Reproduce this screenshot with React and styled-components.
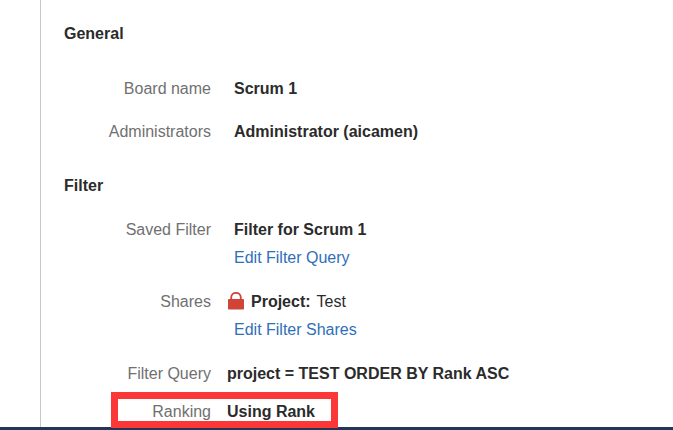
import styled, { createGlobalStyle } from "styled-components";

const GlobalStyle = createGlobalStyle`
  * {
    box-sizing: border-box;
  }

  body {
    margin: 0;
    background: #fff;
    color: #2b2b2b;
    font-family: "Liberation Sans", Arial, sans-serif;
    font-size: 16px;
    line-height: 20px;
  }
`;

const Page = styled.div`
  min-height: 100vh;
  display: flex;
  flex-direction: column;
`;

const SettingsPanel = styled.main`
  flex-grow: 1;
  margin-left: 40px;
  padding: 24px 23px 5px;
  border-left: 1px solid #c8c8c8;
`;

const Footer = styled.footer`
  height: 3px;
  flex-shrink: 0;
  background: #253556;
`;

const Section = styled.section`
  & + & {
    margin-top: 34px;
  }
`;

const SectionTitle = styled.h2`
  margin: 0 0 ${(props) => props.$gap};
  font-size: 16px;
  line-height: 20px;
  font-weight: bold;
`;

const FieldList = styled.dl`
  margin: 0;
  display: flex;
  flex-direction: column;
  align-items: flex-start;
  gap: ${(props) => props.$gap};
`;

const FieldGroup = styled.div`
  display: flex;
  flex-direction: column;
  align-items: flex-start;
  gap: 18px;
`;

const FieldRow = styled.div`
  display: grid;
  grid-template-columns: 147px auto;
  column-gap: 16px;
`;

const HighlightedRow = styled(FieldRow)`
  position: relative;

  &::after {
    content: "";
    position: absolute;
    top: -10px;
    right: -23px;
    bottom: -6px;
    left: 47px;
    border: 7px solid #fc3737;
    pointer-events: none;
  }
`;

const FieldLabel = styled.dt`
  color: #707070;
  text-align: right;
`;

const FieldValue = styled.dd`
  margin: 0;
  padding-left: ${(props) => (props.$flush ? "0" : "7px")};
  display: flex;
  flex-direction: column;
  align-items: flex-start;
  gap: 8px;
  font-weight: bold;
`;

const EditLink = styled.a`
  color: #2f6fb8;
  font-weight: normal;
  text-decoration: none;
  &:hover {
    text-decoration: underline;
  }
`;

const Share = styled.div`
  margin-left: -7px;
  display: flex;
  align-items: center;
  gap: 6px;
`;

const ShareTarget = styled.span`
  font-weight: normal;
`;

const LockIcon = () => (
  <svg width="18" height="20" viewBox="0 0 18 20" aria-hidden="true">
    <path
      d="M4.2 8.5V5.6a4.8 4.8 0 0 1 9.6 0v2.9"
      fill="none"
      stroke="#d04437"
      strokeWidth="1.8"
    />
    <rect x="1" y="7" width="16" height="10.5" rx="0.8" fill="#d04437" />
  </svg>
);

const Field = ({ label, flush, row: Row = FieldRow, children }) => (
  <Row>
    <FieldLabel>{label}</FieldLabel>
    <FieldValue $flush={flush}>{children}</FieldValue>
  </Row>
);

export default function App() {
  return (
    <Page>
      <GlobalStyle />
      <SettingsPanel>
        <Section>
          <SectionTitle $gap="35px">General</SectionTitle>
          <FieldList $gap="23px">
            <Field label="Board name">Scrum 1</Field>
            <Field label="Administrators">Administrator (aicamen)</Field>
          </FieldList>
        </Section>
        <Section>
          <SectionTitle $gap="24px">Filter</SectionTitle>
          <FieldList $gap="24px">
            <Field label="Saved Filter">
              <span>Filter for Scrum 1</span>
              <EditLink href="#filter-query">Edit Filter Query</EditLink>
            </Field>
            <Field label="Shares">
              <Share>
                <LockIcon />
                <span>Project:</span>
                <ShareTarget>Test</ShareTarget>
              </Share>
              <EditLink href="#filter-shares">Edit Filter Shares</EditLink>
            </Field>
            <FieldGroup>
              <Field label="Filter Query" flush>
                project = TEST ORDER BY Rank ASC
              </Field>
              <Field label="Ranking" flush row={HighlightedRow}>
                Using Rank
              </Field>
            </FieldGroup>
          </FieldList>
        </Section>
      </SettingsPanel>
      <Footer />
    </Page>
  );
}
